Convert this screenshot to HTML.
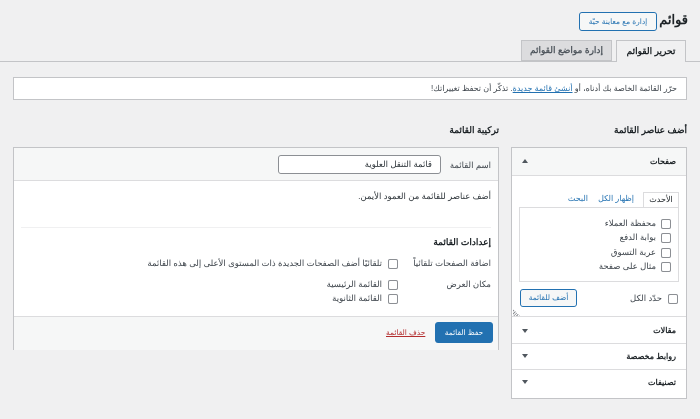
<!DOCTYPE html>
<html dir="rtl"><head><meta charset="utf-8"><style>
*{box-sizing:border-box;margin:0;padding:0}
body{width:700px;height:419px;background:#f0f0f1;font-family:"Liberation Sans","Noto Sans CJK SC",sans-serif;font-size:8.5px;color:#3c434a;position:relative;overflow:hidden}
.a{position:absolute}
.cb{position:absolute;width:10px;height:10px;border:1px solid #8c8f94;border-radius:2px;background:#fff}
.b{font-weight:bold;color:#1d2327}
.row{position:absolute;left:0;right:0;height:26px;border-top:1px solid #dcdcde}
.row span{position:absolute;right:10px;top:8px;font-weight:bold;color:#1d2327;font-size:8px}
.row i{position:absolute;left:10px;top:10px;width:0;height:0;border-left:3px solid transparent;border-right:3px solid transparent;border-top:4px solid #50575e}
</style></head><body>
<div class="a b" style="right:12px;top:12px;font-size:13px">قوائم</div>
<div class="a" style="left:579px;top:12px;width:78px;height:19px;border:1px solid #2271b1;border-radius:3px;background:#f6f7f7;color:#2271b1;font-size:7.5px;text-align:center;line-height:17px">إدارة مع معاينة حيّة</div>
<div class="a" style="left:0;top:61px;width:700px;height:1px;background:#c3c4c7"></div>
<div class="a b" style="left:616px;top:40px;width:70px;height:22px;border:1px solid #c3c4c7;border-bottom:none;background:#f0f0f1;font-size:9px;text-align:center;line-height:20px">تحرير القوائم</div>
<div class="a" style="left:521px;top:40px;width:91px;height:21px;border:1px solid #c3c4c7;background:#dcdcde;font-size:9px;font-weight:bold;color:#50575e;text-align:center;line-height:19px">إدارة مواضع القوائم</div>
<div class="a" style="left:13px;top:77px;width:674px;height:23px;background:#fff;border:1px solid #c3c4c7;padding-right:9px;line-height:21px;font-size:8px;color:#3c434a">حرّر القائمة الخاصة بك أدناه، أو <span style="color:#2271b1;text-decoration:underline">أنشئ قائمة جديدة</span>. تذكّر أن تحفظ تغييراتك!</div>

<div class="a b" style="right:13px;top:125px;font-size:9px">أضف عناصر القائمة</div>
<div class="a b" style="right:201px;top:125px;font-size:9px">تركيبة القائمة</div>

<div class="a" style="left:511px;top:147px;width:176px;height:252px;background:#fff;border:1px solid #c3c4c7">
 <div class="a" style="left:0;right:0;top:0;height:28px;background:#f6f7f7;border-bottom:1px solid #dcdcde"></div>
 <div class="a b" style="right:10px;top:9px;font-size:8px">صفحات</div>
 <div class="a" style="left:10px;top:11px;width:0;height:0;border-left:3px solid transparent;border-right:3px solid transparent;border-bottom:4px solid #50575e"></div>
 <div class="a" style="left:7px;top:44px;width:160px;height:16px;text-align:right;font-size:8px;color:#2271b1">
  <span class="a" style="right:0;top:0;width:36px;height:16px;border:1px solid #dcdcde;border-bottom:1px solid #fff;background:#fff;color:#1d2327;text-align:center;line-height:14px">الأحدث</span>
  <span class="a" style="right:45px;top:2px">إظهار الكل</span>
  <span class="a" style="right:91px;top:2px">البحث</span>
 </div>
 <div class="a" style="left:7px;top:59px;width:160px;height:75px;border:1px solid #dcdcde"></div>
 <div class="cb" style="left:149px;top:71px"></div><div class="a" style="right:30px;top:70px">محفظة العملاء</div>
 <div class="cb" style="left:149px;top:85px"></div><div class="a" style="right:30px;top:84px">بوابة الدفع</div>
 <div class="cb" style="left:149px;top:100px"></div><div class="a" style="right:30px;top:99px">عربة التسوق</div>
 <div class="cb" style="left:149px;top:114px"></div><div class="a" style="right:30px;top:113px">مثال على صفحة</div>
 <div class="cb" style="left:156px;top:146px"></div><div class="a" style="right:24px;top:145px">حدّد الكل</div>
 <div class="a" style="left:8px;top:141px;width:57px;height:18px;border:1px solid #2271b1;border-radius:3px;background:#f6f7f7;color:#2271b1;text-align:center;line-height:16px;font-size:7.5px">أضف للقائمة</div>
 <div class="a" style="left:1px;top:161px;width:8px;height:8px;background:repeating-linear-gradient(135deg,transparent 0 1px,#8c8f94 1px 2px);clip-path:polygon(0 0,100% 100%,0 100%)"></div>
 <div class="row" style="top:168px;height:27px"><span style="top:9px">مقالات</span><i style="top:12px"></i></div>
 <div class="row" style="top:195px"><span>روابط مخصصة</span><i></i></div>
 <div class="row" style="top:221px"><span>تصنيفات</span><i></i></div>
</div>

<div class="a" style="left:13px;top:147px;width:486px;height:203px;background:#fff;border:1px solid #c3c4c7">
 <div class="a" style="left:0;right:0;top:0;height:33px;background:#f6f7f7;border-bottom:1px solid #dcdcde"></div>
 <div class="a" style="right:7px;top:12px">اسم القائمة</div>
 <div class="a" style="left:264px;top:7px;width:163px;height:19px;border:1px solid #8c8f94;border-radius:3px;background:#fff;padding-right:8px;line-height:17px;color:#2c3338">قائمة التنقل العلوية</div>
 <div class="a" style="right:7px;top:43px;color:#2c3338">أضف عناصر للقائمة من العمود الأيمن.</div>
 <div class="a" style="left:7px;right:7px;top:79px;height:1px;background:#f0f0f1"></div>
 <div class="a b" style="right:7px;top:89px;font-size:9px">إعدادات القائمة</div>
 <div class="a" style="right:7px;top:110px">اضافة الصفحات تلقائياً</div>
 <div class="cb" style="left:374px;top:111px"></div><div class="a" style="right:116px;top:110px">تلقائيًا أضف الصفحات الجديدة ذات المستوى الأعلى إلى هذه القائمة</div>
 <div class="a" style="right:7px;top:131px">مكان العرض</div>
 <div class="cb" style="left:374px;top:132px"></div><div class="a" style="right:116px;top:131px">القائمة الرئيسية</div>
 <div class="cb" style="left:374px;top:146px"></div><div class="a" style="right:116px;top:145px">القائمة الثانوية</div>
 <div class="a" style="left:0;right:0;top:168px;height:34px;background:#f6f7f7;border-top:1px solid #dcdcde"></div>
 <div class="a" style="left:421px;top:174px;width:58px;height:21px;background:#2271b1;border-radius:3px;color:#fff;text-align:center;line-height:21px;font-size:7.5px">حفظ القائمة</div>
 <div class="a" style="left:372px;top:180px;color:#b32d2e;text-decoration:underline;font-size:7.5px">حذف القائمة</div>
</div>
</body></html>
